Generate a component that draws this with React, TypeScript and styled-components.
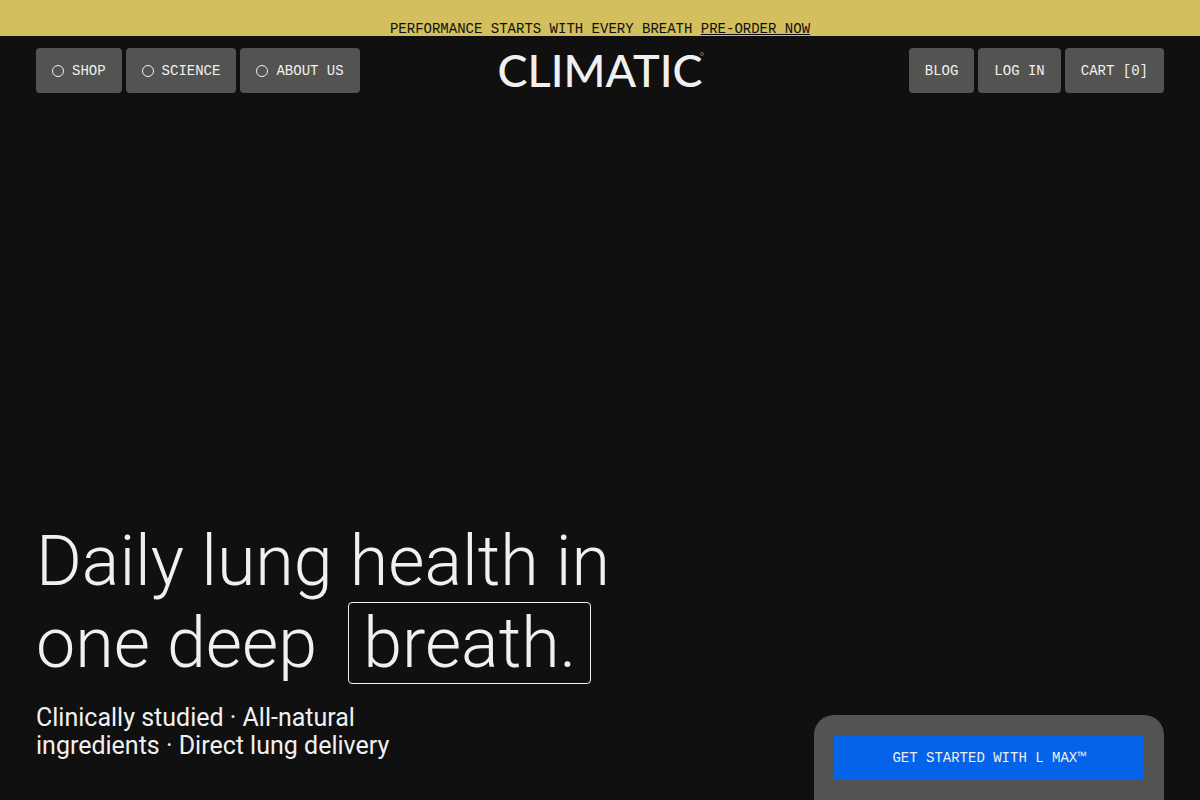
import React from "react";
import styled, { createGlobalStyle } from "styled-components";

const GlobalStyle = createGlobalStyle`
  *, *::before, *::after { box-sizing: border-box; }
  body {
    margin: 0;
    background: #101010;
    color: #f0f0f0;
  }
`;

const mono = `"Liberation Mono", "Courier New", monospace`;
const sans = `Roboto, "Liberation Sans", sans-serif`;

const Page = styled.div`
  display: flex;
  flex-direction: column;
  min-height: 100vh;
`;

const Banner = styled.aside`
  padding: 22px 36px 0;
  background: #d3bf5d;
  color: #101010;
  font: 14px/14px ${mono};
  text-align: center;
  text-transform: uppercase;
`;

const BannerLink = styled.a`
  color: inherit;
  text-underline-offset: 1px;
`;

const Header = styled.header`
  display: grid;
  grid-template-columns: 1fr auto 1fr;
  align-items: center;
  padding: 12px 36px;
`;

const Nav = styled.nav<{ $end?: boolean }>`
  display: flex;
  gap: 4px;
  justify-content: ${(p) => (p.$end ? "flex-end" : "flex-start")};
`;

const pill = `
  display: inline-flex;
  align-items: center;
  gap: 8px;
  height: 45px;
  padding: 0 16px;
  border: 0;
  border-radius: 4px;
  background: #535351;
  color: #f0f0f0;
  font: 14px/16px ${mono};
  text-transform: uppercase;
  text-decoration: none;
  white-space: nowrap;
  cursor: pointer;
`;

const NavButton = styled.button`${pill}`;
const NavLink = styled.a`${pill}`;

const Ring = styled.span`
  width: 12px;
  height: 12px;
  border: 1px solid currentColor;
  border-radius: 50%;
`;

const LogoLink = styled.a`
  position: relative;
  display: block;
  color: inherit;
  font: 500 45px/45px Lato, sans-serif;
  text-decoration: none;
`;

const LogoMark = styled.span`
  position: absolute;
  top: 4px;
  right: -2px;
  width: 4px;
  height: 4px;
  border: 1px solid #6a6a6a;
  border-radius: 50%;
`;

const Hero = styled.main`
  display: flex;
  flex: 1;
  align-items: flex-end;
  justify-content: space-between;
  gap: 36px;
  padding: 0 36px;
`;

const Copy = styled.section`
  padding-bottom: 40px;
  font-family: ${sans};
`;

const Title = styled.h1`
  margin: 0 0 20px;
  font-size: 70px;
  font-weight: 300;
  line-height: 82px;
`;

const Boxed = styled.span`
  display: inline-block;
  margin-left: 14px;
  padding: 0 14px;
  border: 1px solid currentColor;
  border-radius: 4px;
  line-height: 80px;
`;

const Lead = styled.p`
  margin: 0;
  font-size: 25px;
  line-height: 28px;
`;

const OfferCard = styled.aside`
  flex: 0 0 350px;
  padding: 20px;
  border-radius: 20px 20px 0 0;
  background: #535351;
`;

const OfferButton = styled.button`
  display: block;
  width: 100%;
  height: 45px;
  padding: 0 16px;
  border: 0;
  border-radius: 2px;
  background: #0463e8;
  color: #f0f0f0;
  font: 14px/16px ${mono};
  text-transform: uppercase;
  cursor: pointer;
`;

const menus = ["Shop", "Science", "About us"];

export default function App() {
  return (
    <>
      <GlobalStyle />
      <Page>
        <Banner>
          Performance starts with every breath <BannerLink href="#pre-order">Pre-order now</BannerLink>
        </Banner>
        <Header>
          <Nav aria-label="Main">
            {menus.map((label) => (
              <NavButton key={label} type="button">
                <Ring />
                {label}
              </NavButton>
            ))}
          </Nav>
          <LogoLink href="#home">
            CLIMATIC
            <LogoMark />
          </LogoLink>
          <Nav $end aria-label="Account">
            <NavLink href="#blog">Blog</NavLink>
            <NavLink href="#login">Log in</NavLink>
            <NavButton type="button">Cart [0]</NavButton>
          </Nav>
        </Header>
        <Hero>
          <Copy>
            <Title>
              Daily lung health in
              <br />
              one deep <Boxed>breath.</Boxed>
            </Title>
            <Lead>
              Clinically studied · All-natural
              <br />
              ingredients · Direct lung delivery
            </Lead>
          </Copy>
          <OfferCard>
            <OfferButton type="button">Get started with L Max™</OfferButton>
          </OfferCard>
        </Hero>
      </Page>
    </>
  );
}
